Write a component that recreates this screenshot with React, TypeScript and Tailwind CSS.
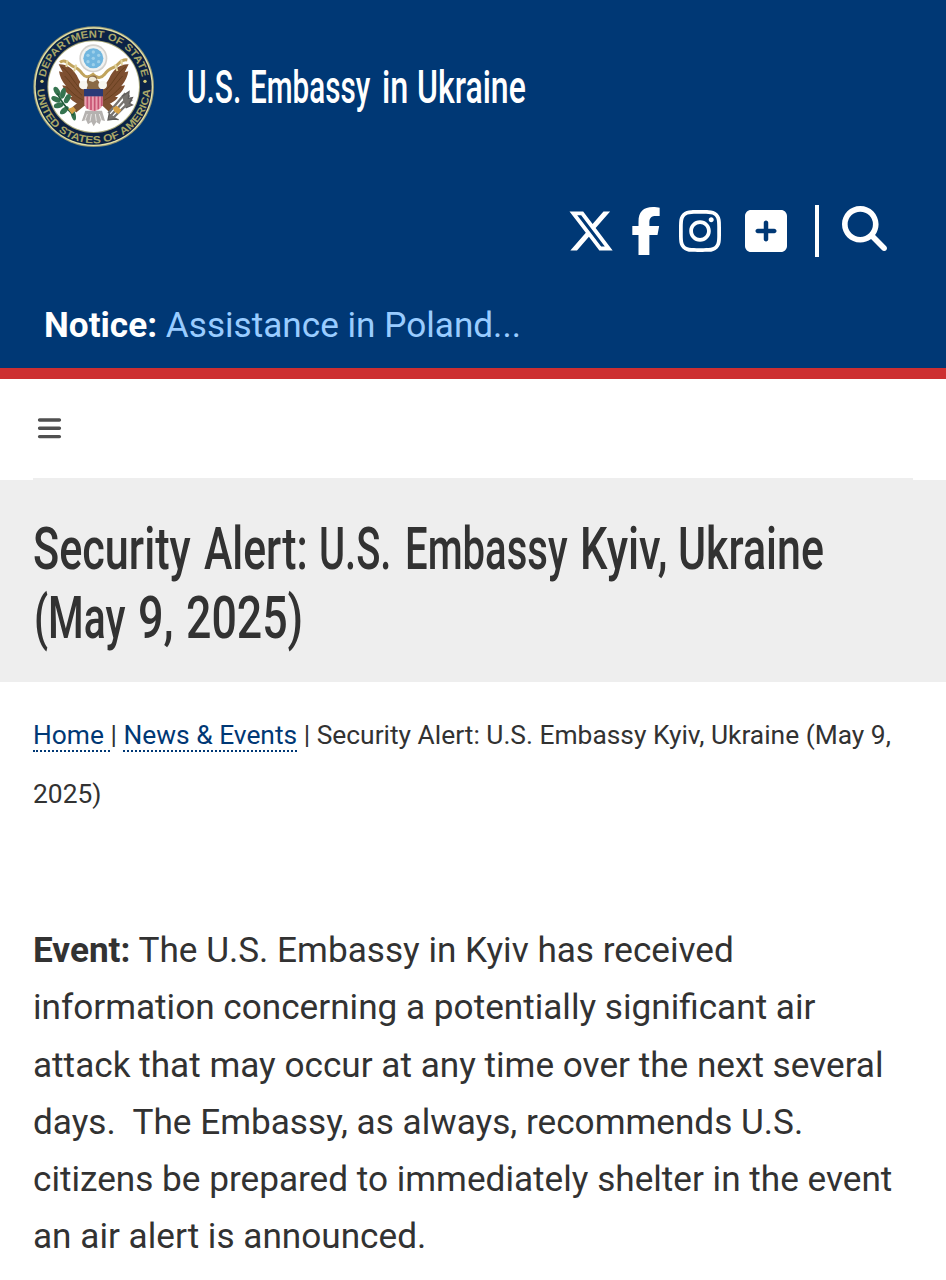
import React from "react";
import { FaXTwitter, FaFacebookF, FaInstagram, FaSquarePlus, FaMagnifyingGlass, FaBars } from "react-icons/fa6";

function Seal() {
  return (
    <svg width="140" height="138" viewBox="0 0 420 414" className="block shrink-0">
      <defs>
        <path id="seal-top" d="M 66 240 A 147 147 0 1 1 352 240" />
        <path id="seal-bottom" d="M 39 206 A 170 170 0 0 0 379 206" />
      </defs>
      <circle cx="209" cy="206" r="181" fill="#8f9272" />
      <circle cx="209" cy="206" r="178" fill="#e6e3a8" />
      <circle cx="209" cy="206" r="174" fill="#0b2246" />
      <circle cx="209" cy="206" r="139" fill="#a9a878" />
      <circle cx="209" cy="206" r="136" fill="#ffffff" />
      <g fill="#a9a768" fontFamily="Liberation Sans, sans-serif" fontSize="31" fontWeight="700">
        <text textLength="406" lengthAdjust="spacingAndGlyphs"><textPath href="#seal-top" startOffset="50%" textAnchor="middle">DEPARTMENT OF STATE</textPath></text>
        <text textLength="518" lengthAdjust="spacingAndGlyphs"><textPath href="#seal-bottom" startOffset="50%" textAnchor="middle">UNITED STATES OF AMERICA</textPath></text>
      </g>
      <circle cx="54" cy="190" r="5" fill="#d8cf7a" />
      <circle cx="363" cy="190" r="5" fill="#d8cf7a" />
      <path d="M184 278 L173 310 L186 306 L192 319 L202 312 L209 325 L217 312 L227 319 L231 306 L243 309 L234 278 Z" fill="#b5b2b0" />
      <path d="M190 288l-7 18M202 288l-4 22M214 288l3 22M226 288l6 18" stroke="#e9e7e5" strokeWidth="3" />
      <path d="M182 250 L150 276 M236 250 L264 276" stroke="#7d5230" strokeWidth="20" />
      <path d="M104 139 C125 137 146 150 158 172 C166 190 176 202 184 212 L184 262 C164 262 146 252 136 238 L145 236 C128 228 119 214 115 202 L126 204 C113 190 107 174 105 160 L116 163 Z" fill="#7e4f30" />
      <path d="M314 139 C293 137 272 150 260 172 C252 190 242 202 234 212 L234 262 C254 262 272 252 282 238 L273 236 C290 228 299 214 303 202 L292 204 C305 190 311 174 313 160 L302 163 Z" fill="#7e4f30" />
      <path d="M112 146 C136 160 146 190 172 216 M122 174 C138 190 150 210 174 232 M128 207 C142 222 156 236 178 247 M306 146 C282 160 272 190 246 216 M296 174 C280 190 268 210 244 232 M290 207 C276 222 262 236 240 247" stroke="#67401f" strokeWidth="3" fill="none" />
      <path d="M108 133 C124 121 134 139 147 145 C159 149 166 154 174 166 C184 179 194 180 207 169 C220 183 232 181 242 169 C250 155 261 152 273 146 C285 139 291 122 310 126" stroke="#c1a45d" strokeWidth="9" fill="none" />
      <path d="M130 127l-3 20M157 140l-7 20M273 139l7 20M292 124l2 18" stroke="#e2d5a0" strokeWidth="6" />
      <circle cx="208" cy="121" r="42" fill="#d3d1cd" />
      <circle cx="208" cy="121" r="37" fill="#f1f2f0" />
      <circle cx="208" cy="121" r="30" fill="#70b6df" />
      <g fill="#9dd0ea">
        <circle cx="208" cy="102" r="5" /><circle cx="192" cy="112" r="5" /><circle cx="224" cy="112" r="5" />
        <circle cx="208" cy="121" r="5" /><circle cx="192" cy="131" r="5" /><circle cx="224" cy="131" r="5" /><circle cx="208" cy="140" r="5" />
      </g>
      <path d="M188 215 C190 196 184 184 197 176 C208 169 221 174 219 184 L230 198 L230 215 Z" fill="#8a6a46" />
      <circle cx="178" cy="201" r="13" fill="#f7f6f0" />
      <circle cx="236" cy="201" r="13" fill="#f7f6f0" />
      <path d="M195 180 C204 172 218 177 218 186 L207 192 L195 188Z" fill="#eee7d4" />
      <path d="M181 214 L236 214 L236 260 Q233 274 209 280 Q184 274 181 260Z" fill="#e9a1b0" />
      <path d="M190 235v37M201 235v41M212 235v43M223 235v39M233 235v29" stroke="#c75373" strokeWidth="5" />
      <path d="M180 213H237V235H180Z" fill="#293a77" />
      <g fill="#35734f">
        <ellipse cx="99" cy="220" rx="8" ry="15" transform="rotate(-30 99 220)" />
        <ellipse cx="117" cy="226" rx="8" ry="17" transform="rotate(15 117 226)" />
        <ellipse cx="96" cy="244" rx="8" ry="15" transform="rotate(-65 96 244)" />
        <ellipse cx="130" cy="242" rx="8" ry="15" transform="rotate(28 130 242)" />
        <ellipse cx="104" cy="262" rx="8" ry="15" transform="rotate(75 104 262)" />
        <ellipse cx="121" cy="277" rx="8" ry="16" transform="rotate(50 121 277)" />
        <ellipse cx="148" cy="290" rx="7" ry="18" transform="rotate(-15 148 290)" />
      </g>
      <path d="M100 226 Q116 260 149 292" fill="none" stroke="#225a3b" strokeWidth="5" />
      <path d="M256 298 L316 232 M264 303 L324 244 M253 286 L304 226" stroke="#77736f" strokeWidth="7" />
      <path d="M294 235l21-14-2 20 12-2-9 17 9 5-20 9M256 286l-4 20 20-3 12 2" fill="#77736f" stroke="#615e5c" strokeWidth="4" />
      <path d="M132 273l16-7 8 10-12 13zM266 270l12-7 14 13-8 12-12-6z" fill="#d5a046" />
    </svg>
  );
}

export default function App() {
  return (
    <div className="h-[1280px] w-[946px] overflow-hidden bg-white font-['Roboto',sans-serif] text-[#323232]">
      <header className="flex h-[379px] flex-col border-b-[11px] border-[#cd2f31] bg-[#003875] text-white">
        <div className="flex h-[174px] items-center pl-6">
          <Seal />
          <div className="ml-[23px] flex text-[46px] font-medium whitespace-nowrap">
            <span className="w-[63px]"><span className="block w-fit origin-left scale-x-[0.650]">U.S.</span></span>
            <span className="w-[132px]"><span className="block w-fit origin-left scale-x-[0.645]">Embassy</span></span>
            <span className="w-[35px]"><span className="block w-fit origin-left scale-x-[0.705]">in</span></span>
            <span className="w-[120px]"><span className="block w-fit origin-left scale-x-[0.696]">Ukraine</span></span>
          </div>
        </div>
        <div className="flex h-[114px] items-center justify-end pr-[59px]">
          <FaXTwitter className="size-12" />
          <FaFacebookF className="ml-[16px] h-12 w-[30px]" />
          <FaInstagram className="ml-[18.500px] h-12 w-[42px]" />
          <FaSquarePlus className="ml-6 h-12 w-[42px]" />
          <div className="ml-[27.500px] h-[52px] w-[4.500px] bg-white" />
          <FaMagnifyingGlass className="mb-[5px] ml-[23px] size-[45px]" />
        </div>
        <div className="flex h-[74px] items-center pl-11 text-[35.160px] whitespace-pre"><b>Notice: </b><a className="text-[#99ccff]">Assistance in Poland...</a></div>
      </header>
      <nav className="mx-[33px] flex h-[101px] items-center border-b-2 border-[#eeeeee] pl-1">
        <FaBars className="h-[26.500px] w-[25px] text-[#505050]" />
      </nav>
      <section className="h-[202px] bg-[#eeeeee] pt-[35px] pl-[33px]">
        <h1 className="text-[60px] leading-[68.500px] font-medium whitespace-nowrap">
          <span className="flex">
            <span className="w-[171px]"><span className="block w-fit origin-left scale-x-[0.720]">Security</span></span>
            <span className="w-[115px]"><span className="block w-fit origin-left scale-x-[0.712]">Alert:</span></span>
            <span className="w-[86px]"><span className="block w-fit origin-left scale-x-[0.665]">U.S.</span></span>
            <span className="w-[175px]"><span className="block w-fit origin-left scale-x-[0.668]">Embassy</span></span>
            <span className="w-[98px]"><span className="block w-fit origin-left scale-x-[0.725]">Kyiv,</span></span>
            <span className="w-[150px]"><span className="block w-fit origin-left scale-x-[0.716]">Ukraine</span></span>
          </span>
          <span className="flex pl-px">
            <span className="w-[104px]"><span className="block w-fit origin-left scale-x-[0.680]">(May</span></span>
            <span className="w-[48px]"><span className="block w-fit origin-left scale-x-[0.750]">9,</span></span>
            <span className="w-[130px]"><span className="block w-fit origin-left scale-x-[0.745]">2025)</span></span>
          </span>
        </h1>
      </section>
      <div className="h-[224px] pt-[24px] pl-[33px] text-[26.370px] leading-[59.400px] whitespace-pre">
        <div><a className="border-b-2 border-dotted border-[#003875] text-[#003875]">Home </a>| <a className="border-b-2 border-dotted border-[#003875] text-[#003875]">News &amp; Events</a> | Security Alert: U.S. Embassy Kyiv, Ukraine (May 9,</div>
        <div>2025)</div>
      </div>
      <main className="pt-[16px] pl-[33px] text-[35.160px] leading-[57.300px] whitespace-pre">
        <div><b>Event:</b> The U.S. Embassy in Kyiv has received</div>
        <div>information concerning a potentially significant air</div>
        <div>attack that may occur at any time over the next several</div>
        <div>days.  The Embassy, as always, recommends U.S.</div>
        <div>citizens be prepared to immediately shelter in the event</div>
        <div>an air alert is announced.</div>
      </main>
    </div>
  );
}
